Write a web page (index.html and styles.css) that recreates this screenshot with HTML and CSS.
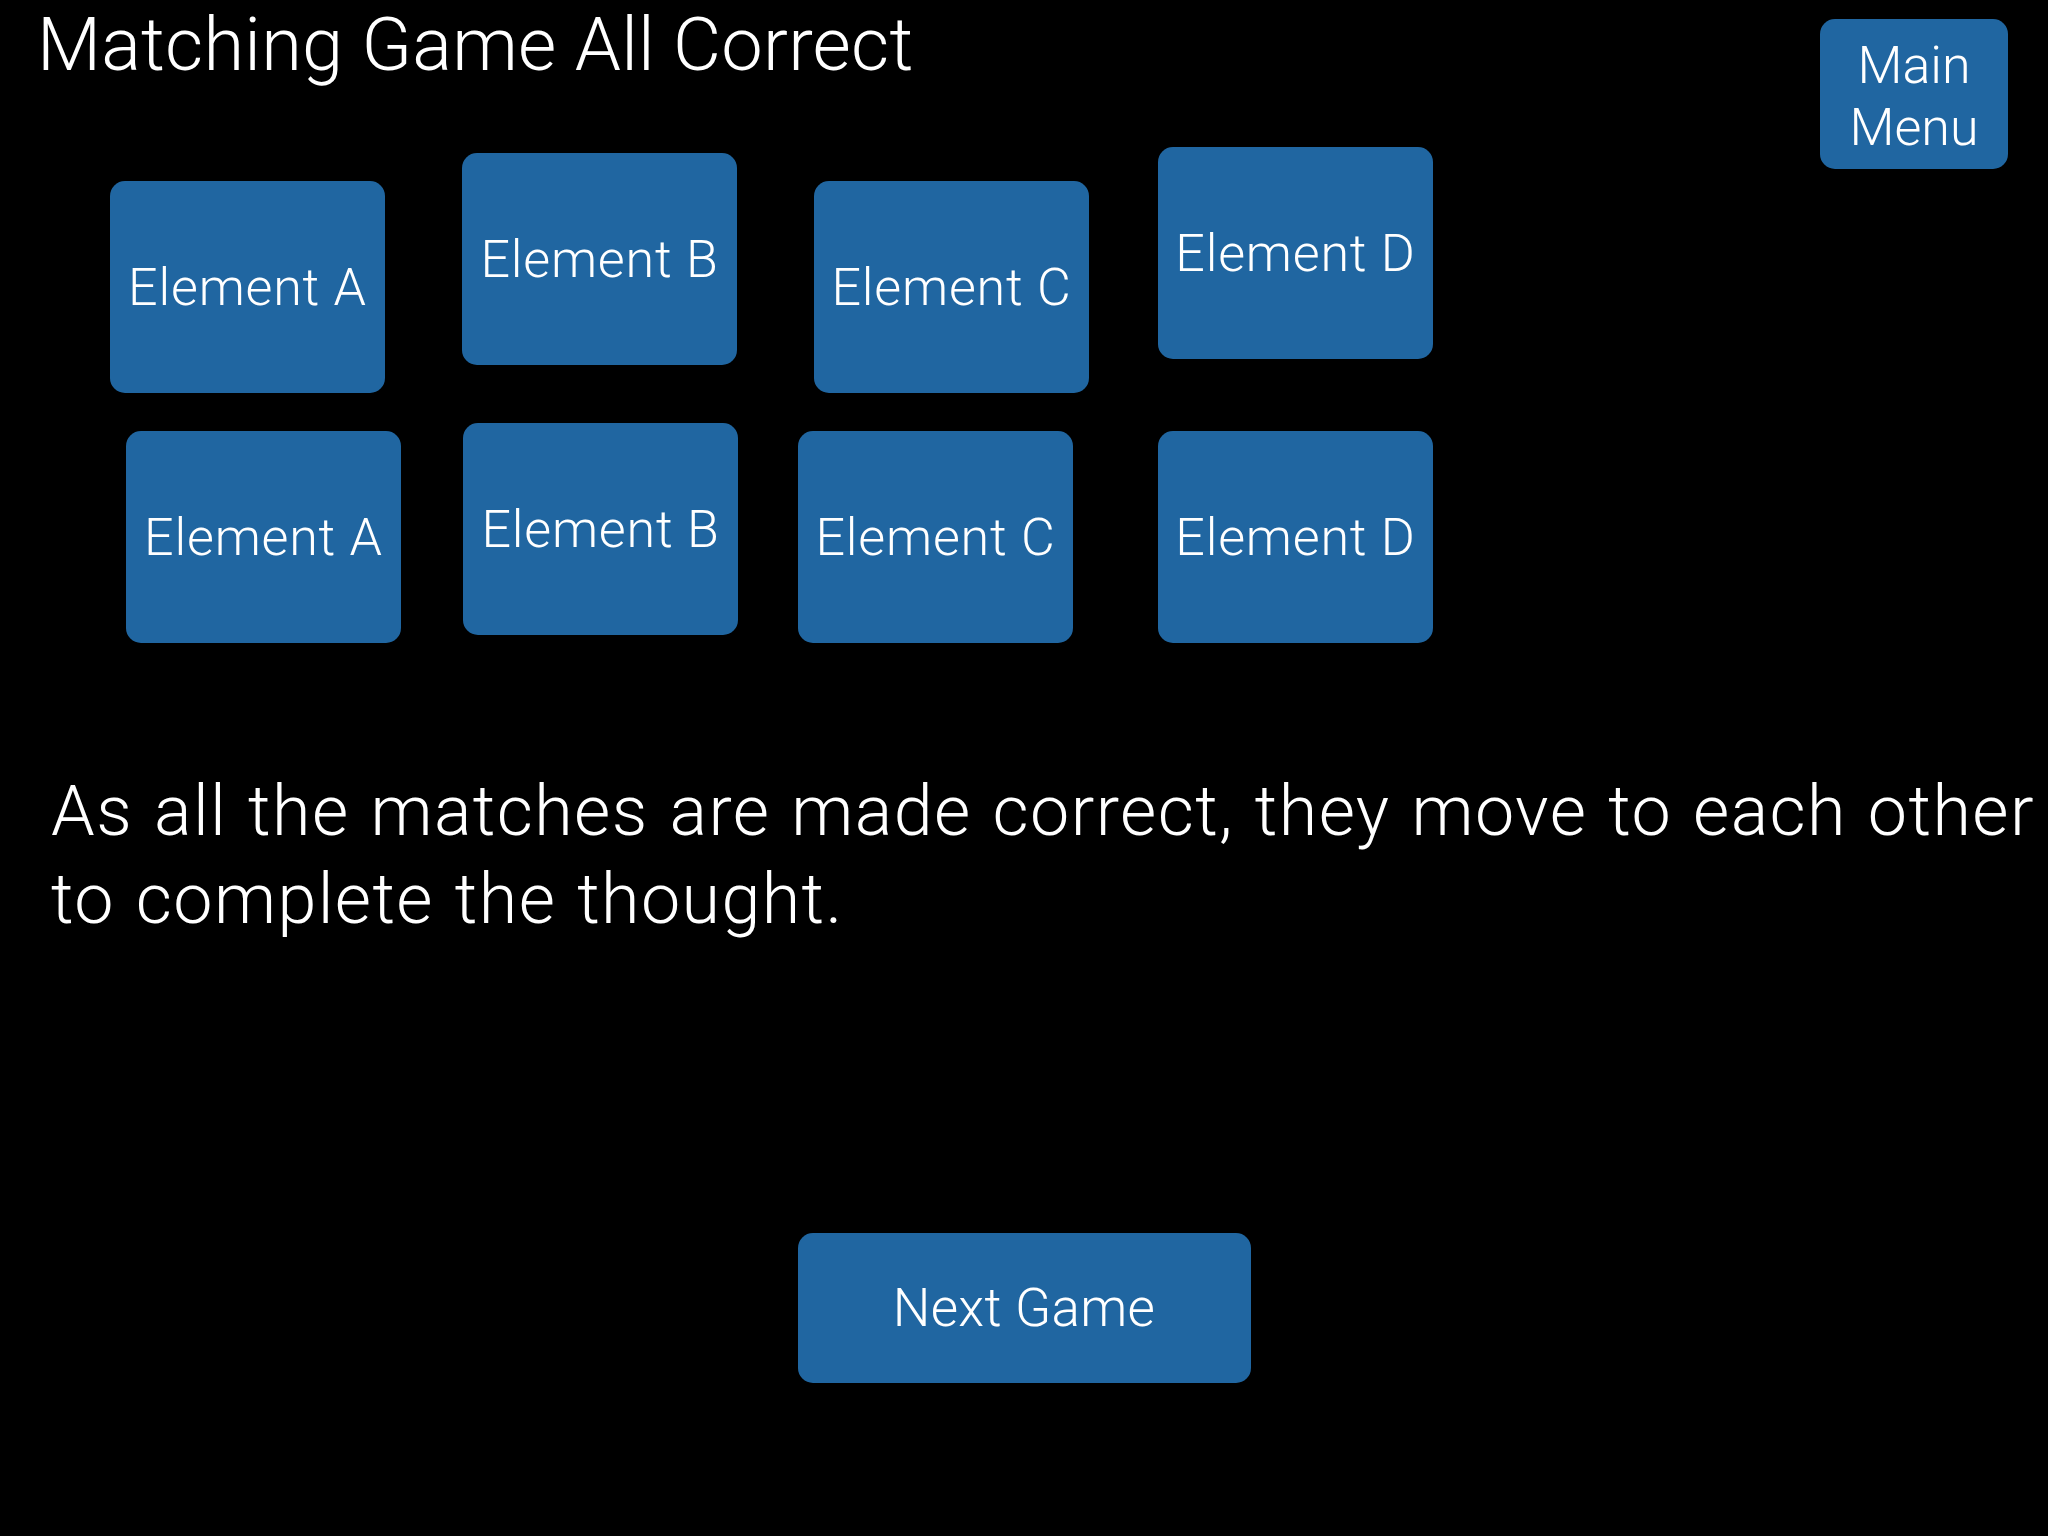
FILE: index.html
```html
<!DOCTYPE html>
<html lang="en">
<head>
<meta charset="utf-8">
<title>Matching Game All Correct</title>
<link rel="stylesheet" href="styles.css">
</head>
<body>
<div class="screen">
  <div class="top">
    <div class="main-col">
      <h1 class="title">Matching Game All Correct</h1>
      <div class="board">
        <div class="row row-1">
          <div class="card r1-a">Element A</div>
          <div class="card r1-b">Element B</div>
          <div class="card r1-c">Element C</div>
          <div class="card r1-d">Element D</div>
        </div>
        <div class="row row-2">
          <div class="card r2-a">Element A</div>
          <div class="card r2-b">Element B</div>
          <div class="card r2-c">Element C</div>
          <div class="card r2-d">Element D</div>
        </div>
      </div>
    </div>
    <button class="btn menu-btn">Main<br>Menu</button>
  </div>
  <p class="message">As all the matches are made correct, they move to each other<br>to complete the thought.</p>
  <div class="actions">
    <button class="btn next-btn">Next Game</button>
  </div>
</div>
</body>
</html>
```
FILE: styles.css
```css
html, body {
  margin: 0;
  padding: 0;
  background: #000;
}
body {
  width: 2048px;
  height: 1536px;
  overflow: hidden;
  font-family: Roboto, "Liberation Sans", sans-serif;
  font-weight: 300;
  color: #fff;
}
.screen {
  display: flex;
  flex-direction: column;
}
.top {
  display: flex;
  align-items: flex-start;
}
.main-col {
  flex: 1;
  display: flex;
  flex-direction: column;
}
.title {
  margin: 8px 0 0 37px;
  font-size: 74px;
  line-height: 74px;
  font-weight: 300;
  letter-spacing: 0.2px;
  white-space: nowrap;
}
.board {
  margin-top: 65px;
  display: flex;
  flex-direction: column;
}
.row {
  display: flex;
  align-items: flex-start;
}
.row-2 {
  margin-top: 30px;
}
.card {
  width: 275px;
  height: 212px;
  border-radius: 15px;
  background: #2066a1;
  display: flex;
  align-items: center;
  justify-content: center;
  padding-top: 2px;
  box-sizing: border-box;
  font-size: 52px;
  line-height: 1;
  letter-spacing: 0.8px;
  white-space: nowrap;
}
.r1-a { margin: 34px 0 0 110px; }
.r1-b { margin: 6px 0 0 77px; }
.r1-c { margin: 34px 0 0 77px; }
.r1-d { margin: 0 0 0 69px; }
.r2-a { margin: 8px 0 0 126px; }
.r2-b { margin: 0 0 0 62px; }
.r2-c { margin: 8px 0 0 60px; }
.r2-d { margin: 8px 0 0 85px; }
.btn {
  border: 0;
  padding: 0;
  background: #2066a1;
  color: #fff;
  font-family: inherit;
  font-weight: 300;
  border-radius: 15px;
  display: flex;
  align-items: center;
  justify-content: center;
  text-align: center;
}
.menu-btn {
  width: 188px;
  height: 150px;
  margin: 19px 40px 0 0;
  padding-top: 5px;
  font-size: 52px;
  line-height: 62px;
}
.message {
  margin: 124px 0 0 0;
  padding-left: 51px;
  font-size: 70px;
  line-height: 88px;
  letter-spacing: 1.4px;
  word-spacing: 2.5px;
  white-space: nowrap;
}
.actions {
  margin-top: 290px;
  display: flex;
  justify-content: center;
}
.next-btn {
  width: 453px;
  height: 150px;
  font-size: 53px;
  line-height: 1;
  letter-spacing: 0.3px;
}
```
